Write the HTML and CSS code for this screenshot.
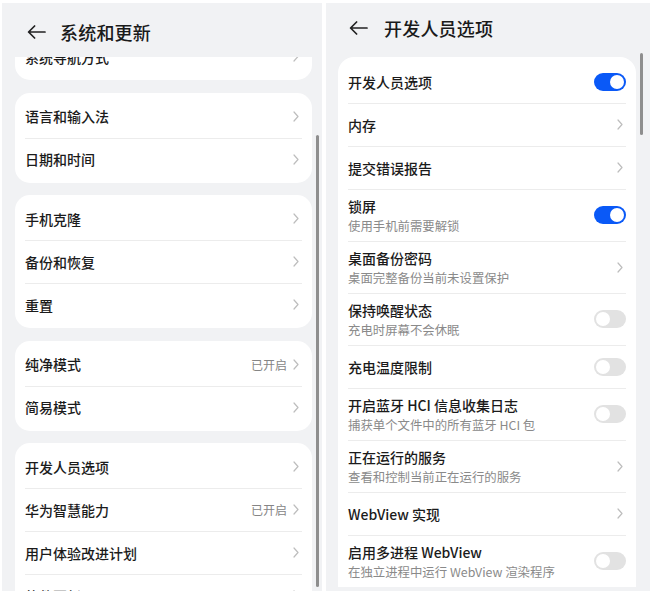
FILE: index.html
```html
<!DOCTYPE html>
<html lang="zh-CN">
<head>
<meta charset="utf-8">
<link rel="stylesheet" href="styles.css">
</head>
<body>
<div class="screens">
  <section class="panel panel-left">
    <header class="bar bar-left">
      <svg class="back" width="19" height="14" viewBox="0 0 19 14"><path d="M18 7H1.6M7.6 1L1.6 7l6 6" fill="none" stroke="#222" stroke-width="1.7" stroke-linecap="round" stroke-linejoin="round"/></svg>
      <h1 class="title">系统和更新</h1>
    </header>
    <div class="scroll">
      <div class="list list-left">
        <div class="card">
          <div class="row"><span class="label">系统导航方式</span><span class="chev"></span></div>
        </div>
        <div class="card">
          <div class="row"><span class="label">语言和输入法</span><span class="chev"></span></div>
          <div class="row"><span class="label">日期和时间</span><span class="chev"></span></div>
        </div>
        <div class="card">
          <div class="row"><span class="label">手机克隆</span><span class="chev"></span></div>
          <div class="row"><span class="label">备份和恢复</span><span class="chev"></span></div>
          <div class="row"><span class="label">重置</span><span class="chev"></span></div>
        </div>
        <div class="card">
          <div class="row"><span class="label">纯净模式</span><span class="value">已开启</span><span class="chev"></span></div>
          <div class="row"><span class="label">简易模式</span><span class="chev"></span></div>
        </div>
        <div class="card">
          <div class="row"><span class="label">开发人员选项</span><span class="chev"></span></div>
          <div class="row"><span class="label">华为智慧能力</span><span class="value">已开启</span><span class="chev"></span></div>
          <div class="row"><span class="label">用户体验改进计划</span><span class="chev"></span></div>
          <div class="row"><span class="label">软件更新</span><span class="chev"></span></div>
        </div>
      </div>
    </div>
    <div class="scrollbar scrollbar-left"></div>
  </section>

  <section class="panel panel-right">
    <header class="bar bar-right">
      <svg class="back" width="19" height="14" viewBox="0 0 19 14"><path d="M18 7H1.6M7.6 1L1.6 7l6 6" fill="none" stroke="#222" stroke-width="1.7" stroke-linecap="round" stroke-linejoin="round"/></svg>
      <h1 class="title">开发人员选项</h1>
    </header>
    <div class="scroll">
      <div class="list list-right">
        <div class="card card-right">
          <div class="row"><span class="label">开发人员选项</span><span class="toggle on"></span></div>
          <div class="row"><span class="label">内存</span><span class="chev"></span></div>
          <div class="row"><span class="label">提交错误报告</span><span class="chev"></span></div>
          <div class="row row-2"><span class="texts"><span class="label">锁屏</span><span class="sub">使用手机前需要解锁</span></span><span class="toggle on"></span></div>
          <div class="row row-2"><span class="texts"><span class="label">桌面备份密码</span><span class="sub">桌面完整备份当前未设置保护</span></span><span class="chev"></span></div>
          <div class="row row-2"><span class="texts"><span class="label">保持唤醒状态</span><span class="sub">充电时屏幕不会休眠</span></span><span class="toggle"></span></div>
          <div class="row"><span class="label">充电温度限制</span><span class="toggle"></span></div>
          <div class="row row-2"><span class="texts"><span class="label">开启蓝牙 HCI 信息收集日志</span><span class="sub">捕获单个文件中的所有蓝牙 HCI 包</span></span><span class="toggle"></span></div>
          <div class="row row-2"><span class="texts"><span class="label">正在运行的服务</span><span class="sub">查看和控制当前正在运行的服务</span></span><span class="chev"></span></div>
          <div class="row"><span class="label">WebView 实现</span><span class="chev"></span></div>
          <div class="row row-2"><span class="texts"><span class="label">启用多进程 WebView</span><span class="sub">在独立进程中运行 WebView 渲染程序</span></span><span class="toggle"></span></div>
        </div>
      </div>
    </div>
    <div class="scrollbar scrollbar-right"></div>
  </section>
</div>
</body>
</html>
```

FILE: styles.css
```css
* { box-sizing: border-box; }
html, body { margin: 0; padding: 0; }
body {
  background: #ffffff;
  font-family: "Noto Sans CJK SC", "Noto Sans", sans-serif;
  color: #1b1b1b;
}
.screens {
  display: flex;
  gap: 4px;
  padding: 3px 0 0 2px;
  height: 591px;
}
.panel {
  position: relative;
  background: #f1f2f4;
  height: 588px;
  overflow: hidden;
  display: flex;
  flex-direction: column;
}
.panel-left { width: 320px; }
.panel-right { width: 324px; }

.bar {
  height: 54px;
  flex: none;
  display: flex;
  align-items: center;
}
.bar-left { padding: 4px 0 0 25px; gap: 14px; }
.bar-right { padding: 0 0 4px 23px; gap: 16px; }
.title {
  margin: 0;
  font-size: 18px;
  font-weight: 500;
  color: #1a1a1a;
  letter-spacing: 0.2px;
}
.back { flex: none; }

.scroll { flex: 1; overflow: hidden; }
.list { display: flex; flex-direction: column; gap: 12.5px; }
.list-left { margin: -24px 10px 0 13px; }
.list-right { margin: 0 14px 0 12px; }

.card {
  background: #ffffff;
  border-radius: 15px;
  padding: 2px 0;
}
.card-right { padding: 3px 0 0; border-radius: 16px 16px 0 0; }

.row {
  position: relative;
  height: 43px;
  display: flex;
  align-items: center;
  padding: 0 10px;
}
.row + .row::before {
  content: "";
  position: absolute;
  top: 0;
  left: 10px;
  right: 10px;
  border-top: 1px solid #ececec;
}
.row-2 { height: 52px; }
.label {
  flex: 1;
  font-size: 14px;
  font-weight: 500;
  color: #1b1b1b;
  white-space: nowrap;
}
.texts {
  flex: 1;
  display: flex;
  flex-direction: column;
  gap: 1px;
}
.texts .label { line-height: 20px; }
.sub {
  font-size: 12.4px;
  line-height: 18px;
  color: #8a8a8a;
  white-space: nowrap;
}
.value {
  font-size: 12px;
  color: #858585;
  margin-right: 6px;
}
.chev {
  flex: none;
  width: 6px;
  height: 11px;
  margin-right: 3px;
  background: no-repeat center/6px 11px url("data:image/svg+xml,%3Csvg xmlns='http://www.w3.org/2000/svg' width='6' height='11' viewBox='0 0 6 11'%3E%3Cpath d='M1 1l4 4.5L1 10' fill='none' stroke='%23bdbdbd' stroke-width='1.2' stroke-linecap='round' stroke-linejoin='round'/%3E%3C/svg%3E");
}
.toggle {
  flex: none;
  position: relative;
  width: 32px;
  height: 18px;
  border-radius: 9px;
  background: #e2e2e2;
}
.toggle::after {
  content: "";
  position: absolute;
  top: 2px;
  left: 2px;
  width: 14px;
  height: 14px;
  border-radius: 50%;
  background: #ffffff;
}
.toggle.on { background: #0a59f7; }
.toggle.on::after { left: 16px; }

.scrollbar {
  position: absolute;
  width: 3px;
  border-radius: 2px;
  background: #8e8e8e;
}
.scrollbar-left { right: 3px; top: 132px; height: 452px; }
.scrollbar-right { right: 7px; top: 50px; height: 82px; }
```
